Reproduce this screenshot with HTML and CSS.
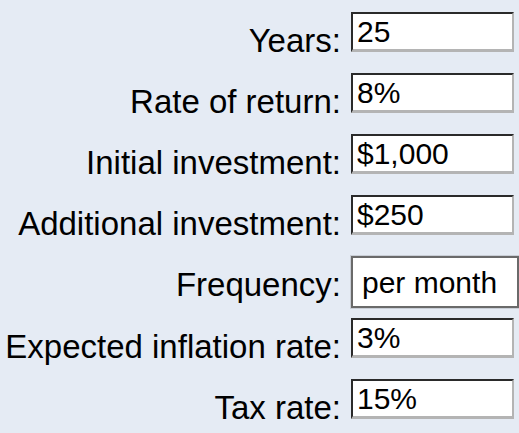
FILE: index.html
```html
<!DOCTYPE html>
<html lang="en">
<head>
    <meta charset="UTF-8">
    <title>Investment calculator</title>
    <link rel="stylesheet" href="styles.css">
</head>
<body>
    <form class="calc-form">
        <div class="row">
            <label class="label" for="years">Years:</label>
            <input class="field" type="text" id="years" value="25">
        </div>
        <div class="row">
            <label class="label" for="rate">Rate of return:</label>
            <input class="field" type="text" id="rate" value="8%">
        </div>
        <div class="row">
            <label class="label" for="initial">Initial investment:</label>
            <input class="field" type="text" id="initial" value="$1,000">
        </div>
        <div class="row">
            <label class="label" for="additional">Additional investment:</label>
            <input class="field" type="text" id="additional" value="$250">
        </div>
        <div class="row row-select">
            <label class="label" for="frequency">Frequency:</label>
            <select class="picker" id="frequency">
                <option>per month</option>
                <option>per year</option>
            </select>
        </div>
        <div class="row">
            <label class="label" for="inflation">Expected inflation rate:</label>
            <input class="field" type="text" id="inflation" value="3%">
        </div>
        <div class="row">
            <label class="label" for="tax">Tax rate:</label>
            <input class="field" type="text" id="tax" value="15%">
        </div>
    </form>
</body>
</html>
```

FILE: styles.css
```css
/* Reset */
body, form {
    margin: 0;
    padding: 0;
}

body {
    width: 100%;
    height: 100vh;
    overflow: hidden;
    background-color: #e5ebf4;
    font-family: "Liberation Sans", Arial, sans-serif;
    color: #000;
}

.calc-form {
    display: flex;
    flex-direction: column;
    gap: 21px;
    padding-top: 12px;
}

.row {
    display: flex;
    align-items: flex-end;
    gap: 10px;
}

/* labels sit on the bottom edge of the text boxes */
.label {
    width: 341px;
    flex-shrink: 0;
    text-align: right;
    font-size: 33px;
    line-height: 22px;
}

.field {
    box-sizing: border-box;
    width: 163px;
    height: 40px;
    margin: 0;
    padding: 0 4px;
    border-style: solid;
    border-width: 2px 2px 3px 2px;
    border-color: #2a2a2a #b4b4b4 #b4b4b4 #2a2a2a;
    background: #fff;
    font-family: "Liberation Sans", Arial, sans-serif;
    font-size: 30px;
    color: #000;
    outline: none;
}

.row-select {
    align-items: center;
    margin-bottom: -11px;
}

.row-select .label {
    line-height: 36px;
    margin-top: 6px;
}

.picker {
    box-sizing: border-box;
    width: 200px;
    height: 52px;
    margin: 0;
    padding: 0 0 0 9px;
    appearance: none;
    -webkit-appearance: none;
    border: 2px solid #6a6a6a;
    border-radius: 0;
    box-shadow: 0 0 0 1px #c9ced6;
    background: #fff;
    font-family: "Liberation Sans", Arial, sans-serif;
    font-size: 30px;
    color: #000;
    outline: none;
}
```
